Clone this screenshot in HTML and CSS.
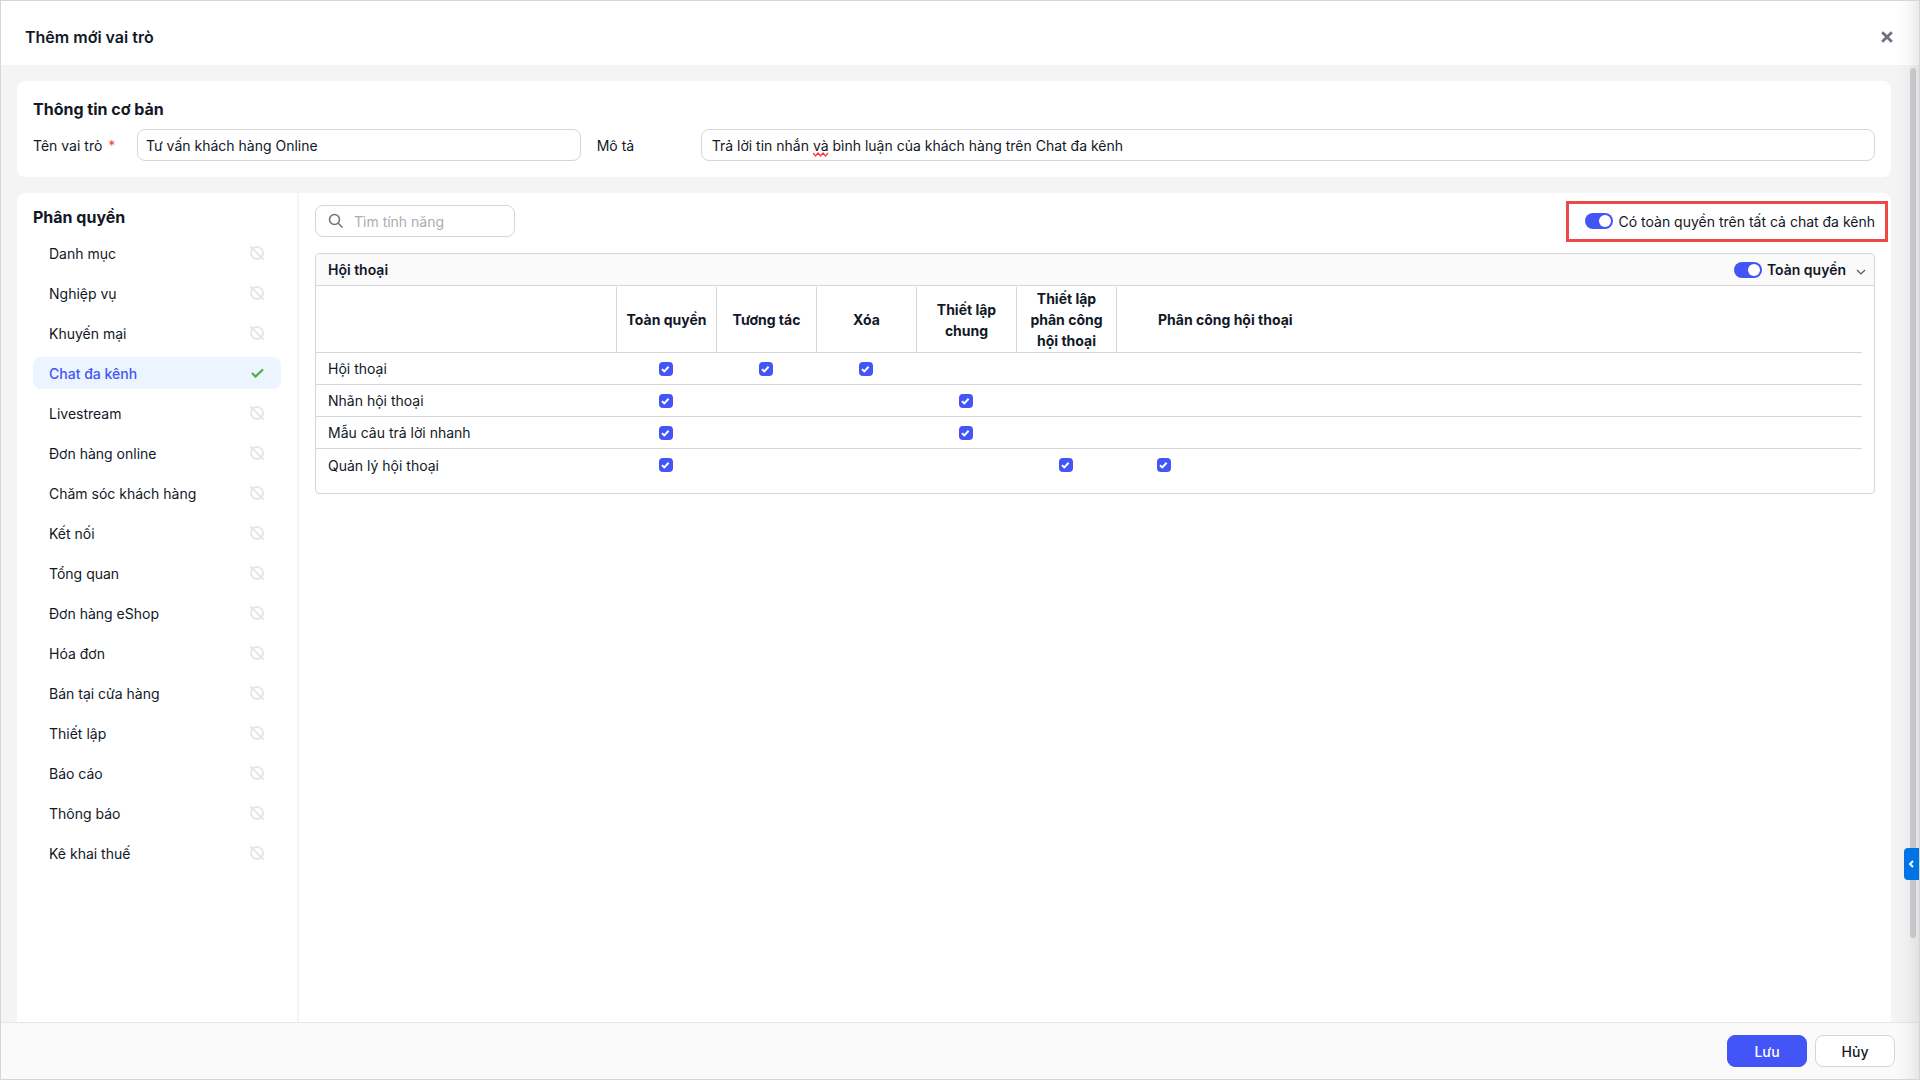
FILE: index.html
```html
<!DOCTYPE html>
<html lang="vi">
<head>
<meta charset="utf-8">
<title>Thêm mới vai trò</title>
<meta name="viewport" content="width=device-width, initial-scale=1">
<link rel="stylesheet" href="styles.css">
</head>
<body>
<svg class="sprite" aria-hidden="true">
  <symbol id="icon-off" viewBox="0 0 16 16"><circle cx="8" cy="8" r="6" fill="none" stroke="currentColor" stroke-width="2"/><path d="M1.5 1.5 14.5 14.5" fill="none" stroke="currentColor" stroke-width="2"/></symbol>
  <symbol id="icon-check" viewBox="0 0 16 16"><path d="M3 8 6.5 11.5 14 4.5" fill="none" stroke="currentColor" stroke-width="2.2"/></symbol>
</svg>
<div class="dialog">
  <header class="dialog-header">
    <h1 class="dialog-title">Thêm mới vai trò</h1>
    <button class="close" type="button" aria-label="Đóng"><svg width="12" height="12" viewBox="0 0 12 12"><path d="M1.2 1.2 10.8 10.8M10.8 1.2 1.2 10.8" fill="none" stroke="currentColor" stroke-width="2.8"/></svg></button>
  </header>

  <main class="dialog-body">
    <section class="card info">
      <h2 class="section-title">Thông tin cơ bản</h2>
      <div class="info-row">
        <label for="role-name">Tên vai trò <span class="required">*</span></label>
        <input class="text-input name-input" id="role-name" type="text" value="Tư vấn khách hàng Online">
        <label class="desc-label" for="role-desc">Mô tả</label>
        <div class="desc-field">
          <input class="text-input desc-input" id="role-desc" type="text" spellcheck="false" value="Trả lời tin nhắn và bình luận của khách hàng trên Chat đa kênh">
          <svg class="squiggle" width="16" height="5" viewBox="0 0 16 5" aria-hidden="true"><path d="M0 1 2.5 4 5 1 7.5 4 10 1 12.5 4 15 1" fill="none" stroke="#f33" stroke-width="1.2"/></svg>
        </div>
      </div>
    </section>

    <section class="card permissions">
      <nav class="sidebar">
        <h2 class="section-title">Phân quyền</h2>
        <ul class="menu">
          <li><a class="menu-item" href="#">Danh mục<svg class="state"><use href="#icon-off"/></svg></a></li>
          <li><a class="menu-item" href="#">Nghiệp vụ<svg class="state"><use href="#icon-off"/></svg></a></li>
          <li><a class="menu-item" href="#">Khuyến mại<svg class="state"><use href="#icon-off"/></svg></a></li>
          <li><a class="menu-item active" href="#" aria-current="page">Chat đa kênh<svg class="state"><use href="#icon-check"/></svg></a></li>
          <li><a class="menu-item" href="#">Livestream<svg class="state"><use href="#icon-off"/></svg></a></li>
          <li><a class="menu-item" href="#">Đơn hàng online<svg class="state"><use href="#icon-off"/></svg></a></li>
          <li><a class="menu-item" href="#">Chăm sóc khách hàng<svg class="state"><use href="#icon-off"/></svg></a></li>
          <li><a class="menu-item" href="#">Kết nối<svg class="state"><use href="#icon-off"/></svg></a></li>
          <li><a class="menu-item" href="#">Tổng quan<svg class="state"><use href="#icon-off"/></svg></a></li>
          <li><a class="menu-item" href="#">Đơn hàng eShop<svg class="state"><use href="#icon-off"/></svg></a></li>
          <li><a class="menu-item" href="#">Hóa đơn<svg class="state"><use href="#icon-off"/></svg></a></li>
          <li><a class="menu-item" href="#">Bán tại cửa hàng<svg class="state"><use href="#icon-off"/></svg></a></li>
          <li><a class="menu-item" href="#">Thiết lập<svg class="state"><use href="#icon-off"/></svg></a></li>
          <li><a class="menu-item" href="#">Báo cáo<svg class="state"><use href="#icon-off"/></svg></a></li>
          <li><a class="menu-item" href="#">Thông báo<svg class="state"><use href="#icon-off"/></svg></a></li>
          <li><a class="menu-item" href="#">Kê khai thuế<svg class="state"><use href="#icon-off"/></svg></a></li>
        </ul>
      </nav>

      <div class="content">
        <div class="toolbar">
          <div class="search">
            <svg width="16" height="16" viewBox="0 0 16 16" aria-hidden="true"><circle cx="6.5" cy="6.5" r="5" fill="none" stroke="currentColor" stroke-width="1.5"/><path d="M10.2 10.2 14.5 14.5" fill="none" stroke="currentColor" stroke-width="1.5"/></svg>
            <input class="search-input" type="search" placeholder="Tìm tính năng" aria-label="Tìm tính năng">
          </div>
          <label class="switch highlighted"><input class="toggle" type="checkbox" checked>Có toàn quyền trên tất cả chat đa kênh</label>
        </div>

        <section class="group">
          <header class="group-header">
            <h3 class="group-title">Hội thoại</h3>
            <div class="group-actions">
              <label class="switch strong"><input class="toggle" type="checkbox" checked>Toàn quyền</label>
              <button class="collapse" type="button" aria-label="Thu gọn"><svg width="10" height="6" viewBox="0 0 10 6"><path d="M1 1 5 5 9 1" fill="none" stroke="currentColor" stroke-width="1.2"/></svg></button>
            </div>
          </header>
          <table class="matrix">
            <colgroup><col class="col-name"><col class="col-perm"><col class="col-perm"><col class="col-perm"><col class="col-perm"><col class="col-perm"><col></colgroup>
            <thead>
              <tr><td></td><th scope="col">Toàn quyền</th><th scope="col">Tương tác</th><th scope="col">Xóa</th><th scope="col">Thiết lập chung</th><th scope="col">Thiết lập phân công hội thoại</th><th scope="col" class="last">Phân công hội thoại</th></tr>
            </thead>
            <tbody>
              <tr><th scope="row">Hội thoại</th><td><input class="check" type="checkbox" checked aria-label="Hội thoại: Toàn quyền"></td><td><input class="check" type="checkbox" checked aria-label="Hội thoại: Tương tác"></td><td><input class="check" type="checkbox" checked aria-label="Hội thoại: Xóa"></td><td></td><td></td><td class="last"></td></tr>
              <tr><th scope="row">Nhãn hội thoại</th><td><input class="check" type="checkbox" checked aria-label="Nhãn hội thoại: Toàn quyền"></td><td></td><td></td><td><input class="check" type="checkbox" checked aria-label="Nhãn hội thoại: Thiết lập chung"></td><td></td><td class="last"></td></tr>
              <tr><th scope="row">Mẫu câu trả lời nhanh</th><td><input class="check" type="checkbox" checked aria-label="Mẫu câu trả lời nhanh: Toàn quyền"></td><td></td><td></td><td><input class="check" type="checkbox" checked aria-label="Mẫu câu trả lời nhanh: Thiết lập chung"></td><td></td><td class="last"></td></tr>
              <tr><th scope="row">Quản lý hội thoại</th><td><input class="check" type="checkbox" checked aria-label="Quản lý hội thoại: Toàn quyền"></td><td></td><td></td><td></td><td><input class="check" type="checkbox" checked aria-label="Quản lý hội thoại: Thiết lập phân công hội thoại"></td><td class="last"><input class="check" type="checkbox" checked aria-label="Quản lý hội thoại: Phân công hội thoại"></td></tr>
            </tbody>
          </table>
        </section>
      </div>
    </section>
  </main>

  <footer class="dialog-footer">
    <button class="btn primary" type="button">Lưu</button>
    <button class="btn" type="button">Hủy</button>
  </footer>

  <div class="scroll-thumb" aria-hidden="true"></div>
  <div class="edge-shadow" aria-hidden="true"></div>
  <button class="side-tab" type="button" aria-label="Mở rộng"><svg width="6" height="8" viewBox="0 0 6 8"><path d="M5 1 2 4 5 7" fill="none" stroke="currentColor" stroke-width="2"/></svg></button>
</div>
</body>
</html>
```
FILE: styles.css
```css
*,
*::before,
*::after {
  box-sizing: border-box;
}

body {
  margin: 0;
  font: 400 14px/21px Inter, "Liberation Sans", sans-serif;
  color: #111827;
}

h1, h2, h3, ul {
  margin: 0;
  padding: 0;
}

input, button {
  font: inherit;
  color: inherit;
  margin: 0;
}

.sprite {
  display: none;
}

.dialog {
  position: relative;
  display: flex;
  flex-direction: column;
  min-height: 100vh;
  border: 1px solid #d5d6da;
  background: #f4f4f4;
  overflow: hidden;
}

.dialog-header {
  display: flex;
  align-items: center;
  justify-content: space-between;
  height: 64px;
  padding: 8px 24px 0;
  background: #fff;
}

.dialog-title {
  font-size: 16px;
  line-height: 24px;
  font-weight: 600;
}

.close {
  display: flex;
  padding: 2px;
  border: 0;
  background: none;
  color: #6b7280;
}

.dialog-body {
  flex: 1;
  display: flex;
  flex-direction: column;
  gap: 16px;
  padding: 16px 28px 0 16px;
}

.card {
  background: #fff;
  border-radius: 8px;
}

.info {
  display: flex;
  flex-direction: column;
  gap: 8px;
  padding: 16px;
}

.section-title {
  font-size: 16px;
  line-height: 24px;
  font-weight: 700;
}

.info-row {
  display: grid;
  grid-template-columns: 104px minmax(0, 444fr) 120px minmax(0, 1175fr);
  align-items: center;
}

.desc-label {
  padding-left: 16px;
}

.required {
  color: #ef4444;
  margin-left: 2px;
}

.text-input {
  width: 100%;
  height: 32px;
  padding: 0 10px;
  border: 1px solid #d5d6da;
  border-radius: 8px;
  background: #fff;
}

.name-input {
  padding: 0 8px;
}

.desc-field {
  position: relative;
}

.desc-input {
  display: block;
}

.squiggle {
  position: absolute;
  left: 112px;
  top: 23px;
}

.permissions {
  flex: 1;
  display: flex;
  border-radius: 8px 8px 0 0;
}

.sidebar {
  flex: none;
  display: flex;
  flex-direction: column;
  gap: 8px;
  width: 282px;
  padding: 12px 16px 16px;
  border-right: 2px solid #f4f4f4;
}

.menu {
  display: flex;
  flex-direction: column;
  gap: 8px;
  list-style: none;
}

.menu-item {
  display: flex;
  align-items: center;
  justify-content: space-between;
  height: 32px;
  padding: 0 16px;
  border-radius: 8px;
  color: inherit;
  text-decoration: none;
}

.state {
  width: 16px;
  height: 16px;
  color: #e5e7eb;
}

.menu-item.active {
  background: #ebf4ff;
  color: #4355f6;
  font-weight: 500;
}

.active .state {
  color: #4caf3f;
}

.content {
  flex: 1;
  min-width: 0;
  display: flex;
  flex-direction: column;
  gap: 16px;
  padding: 12px 16px;
}

.toolbar {
  display: flex;
  align-items: center;
  justify-content: space-between;
}

.search {
  display: flex;
  align-items: center;
  gap: 10px;
  width: 200px;
  height: 32px;
  padding: 0 12px;
  border: 1px solid #d5d6da;
  border-radius: 8px;
  color: #6b7280;
}

.search svg {
  flex: none;
}

.search-input {
  min-width: 0;
  flex: 1;
  padding: 0;
  border: 0;
  outline: 0;
  background: none;
  color: #111827;
}

.search-input::placeholder {
  color: #a9adb5;
  opacity: 1;
}

.switch {
  display: flex;
  align-items: center;
  gap: 5px;
  height: 32px;
}

.strong {
  font-weight: 600;
}

.highlighted {
  position: relative;
  gap: 6px;
}

.highlighted::after {
  content: "";
  position: absolute;
  inset: -4px -13px -5px -19px;
  border: 3px solid #ea4b45;
  pointer-events: none;
}

.toggle {
  appearance: none;
  display: flex;
  align-items: center;
  justify-content: flex-end;
  width: 28px;
  height: 16px;
  padding: 2px;
  border-radius: 8px;
  background: #4355f6;
}

.toggle::before {
  content: "";
  width: 12px;
  height: 12px;
  border-radius: 50%;
  background: #fff;
}

.group {
  border: 1px solid #d5d6da;
  border-radius: 4px;
  overflow: hidden;
}

.group-header {
  display: flex;
  align-items: center;
  justify-content: space-between;
  height: 32px;
  padding: 0 8px 0 12px;
  border-bottom: 1px solid #d5d6da;
  background: #fafafa;
}

.group-title {
  font-size: 14px;
  line-height: 21px;
  font-weight: 600;
}

.group-actions {
  display: flex;
  align-items: center;
  gap: 10px;
}

.collapse {
  display: flex;
  padding: 4px 0 0;
  border: 0;
  background: none;
  color: #4b5563;
}

.matrix {
  width: calc(100% - 12px);
  margin: 1px 0 12px;
  border-spacing: 0;
  table-layout: fixed;
}

.col-name {
  width: 300px;
}

.col-perm {
  width: 100px;
}

.matrix th,
.matrix td {
  height: 32px;
  padding: 0;
  border-bottom: 1px solid #d5d6da;
  text-align: center;
}

.matrix thead th,
.matrix thead td {
  height: 66px;
}

.matrix thead th {
  padding: 0 8px;
  border-left: 1px solid #d5d6da;
  font-weight: 700;
}

.matrix tbody th {
  padding-left: 12px;
  text-align: left;
  font-weight: 400;
}

.matrix tbody tr:last-child > * {
  border-bottom: 0;
}

.matrix .last {
  padding-left: 41px;
  text-align: left;
}

.check {
  appearance: none;
  display: block;
  width: 14px;
  height: 14px;
  margin: 0 auto;
  border-radius: 4px;
  background: #4355f6 url("data:image/svg+xml,%3Csvg xmlns='http://www.w3.org/2000/svg' viewBox='0 0 14 14'%3E%3Cpath d='M3 7.3 5.3 9.4 9.6 4.8' fill='none' stroke='white' stroke-width='2'/%3E%3C/svg%3E") center / 14px 14px no-repeat;
}

.last .check {
  margin: 0;
}

.dialog-footer {
  display: flex;
  align-items: center;
  justify-content: flex-end;
  gap: 8px;
  height: 57px;
  padding: 0 24px;
  border-top: 1px solid #e5e7eb;
  background: #fafafa;
}

.btn {
  width: 80px;
  height: 32px;
  padding: 0;
  border: 1px solid #d5d6da;
  border-radius: 8px;
  background: #fff;
  font-weight: 500;
}

.btn.primary {
  border-color: #4355f6;
  background: #4355f6;
  color: #fff;
}

.scroll-thumb {
  position: absolute;
  top: 67px;
  right: 3px;
  bottom: 141px;
  width: 6px;
  border-radius: 3px;
  background: #d0d1d5;
}

.edge-shadow {
  position: absolute;
  top: 0;
  right: 0;
  bottom: 0;
  width: 24px;
  background: linear-gradient(to right, rgba(0, 0, 0, 0), rgba(0, 0, 0, 0.02) 50%, rgba(0, 0, 0, 0.08));
  pointer-events: none;
}

.side-tab {
  position: absolute;
  right: -1px;
  bottom: 199px;
  display: flex;
  align-items: center;
  width: 16px;
  height: 32px;
  padding: 0 4px;
  border: 0;
  border-radius: 4px 0 0 4px;
  background: #0073e6;
  color: #fff;
}
```
